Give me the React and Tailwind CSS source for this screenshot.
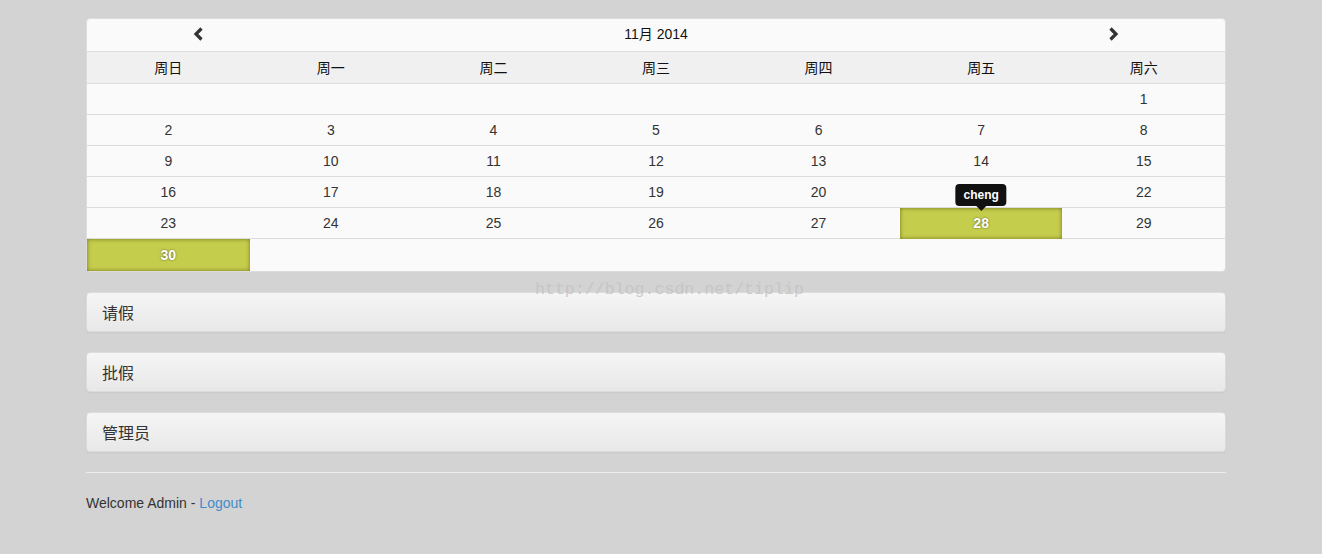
import React from "react";

const days = ["周日", "周一", "周二", "周三", "周四", "周五", "周六"];
const weeks = [
  [null, null, null, null, null, null, 1],
  [2, 3, 4, 5, 6, 7, 8],
  [9, 10, 11, 12, 13, 14, 15],
  [16, 17, 18, 19, 20, 21, 22],
  [23, 24, 25, 26, 27, 28, 29],
  [30, null, null, null, null, null, null],
];
const marked = [28, 30];

function Chevron({ dir }) {
  return (
    <svg width="12" height="14" viewBox="0 0 12 14">
      {dir === "left" ? (
        <path d="M8.5 1.5 L3 7 L8.5 12.5" fill="none" stroke="#333" strokeWidth="3.2" strokeLinejoin="miter" />
      ) : (
        <path d="M3.5 1.5 L9 7 L3.5 12.5" fill="none" stroke="#333" strokeWidth="3.2" strokeLinejoin="miter" />
      )}
    </svg>
  );
}

function Panel({ title }) {
  return (
    <div className="h-[40px] rounded-[4px] border border-[#dcdcdc] bg-gradient-to-b from-[#f5f5f5] to-[#e8e8e8] shadow-[0_1px_2px_rgba(0,0,0,0.05)] flex items-center px-[15px] text-[16px] text-[#333]">
      {title}
    </div>
  );
}

export default function App() {
  return (
    <div
      className="min-h-[554px] w-full bg-[#d3d3d3] relative"
      style={{ fontFamily: '"Liberation Sans", Arial, "Noto Sans CJK SC", sans-serif' }}
    >
      <div className="w-[1140px] ml-[86px] pt-[18px]">
        <div className="rounded-[4px] border border-[#dcdcdc] bg-[#fafafa] overflow-visible text-[14px] text-[#333]">
          <div className="grid grid-cols-[224px_1fr_224px] h-[33px] items-center border-b border-[#ddd]">
            <div className="flex justify-center pb-[2px]"><Chevron dir="left" /></div>
            <div className="text-center text-[14px] text-[#111] pb-[2px]" style={{ fontFamily: '"Liberation Sans", "Noto Sans CJK SC", sans-serif' }}>11月 2014</div>
            <div className="flex justify-center pb-[2px]"><Chevron dir="right" /></div>
          </div>
          <div className="grid grid-cols-7 h-[32px] items-center bg-[#f0f0f0] border-b border-[#ddd]">
            {days.map((d) => (
              <div key={d} className="text-center text-[14px] text-[#111]" style={{ fontFamily: '"Noto Sans CJK SC", sans-serif' }}>{d}</div>
            ))}
          </div>
          {weeks.map((w, i) => (
            <div key={i} className={`grid grid-cols-7 h-[31px] ${i < weeks.length - 1 ? "border-b border-[#ddd]" : ""}`}>
              {w.map((n, j) => {
                const hi = marked.includes(n);
                return (
                  <div
                    key={j}
                    className={
                      hi
                        ? "relative flex items-center justify-center bg-[#c5cd4d] shadow-[inset_0_0_4px_rgba(80,80,0,0.7)] text-white font-bold [text-shadow:0_0_2px_rgba(0,0,0,0.6)] -mb-px"
                        : "flex items-center justify-center"
                    }
                  >
                    {n}
                    {n === 28 && (
                      <div className="absolute bottom-[28px] left-1/2 -translate-x-1/2 flex flex-col items-center z-10">
                        <div className="bg-[#111] text-white text-[12px] font-bold rounded-[4px] px-[8px] h-[22px] flex items-center [text-shadow:none]">cheng</div>
                        <div className="w-0 h-0 border-l-[5px] border-r-[5px] border-t-[5px] border-l-transparent border-r-transparent border-t-[#111]" />
                      </div>
                    )}
                  </div>
                );
              })}
            </div>
          ))}
          <div className="h-[1px]" />
        </div>

        <div className="mt-[20px] flex flex-col gap-[20px]" style={{ fontFamily: '"Noto Sans CJK SC", sans-serif' }}>
          <Panel title="请假" />
          <Panel title="批假" />
          <Panel title="管理员" />
        </div>

        <div className="mt-[20px] border-t border-[#eeeeee]" />
        <div className="mt-[20px] text-[14px] text-[#333]">
          Welcome Admin - <span className="text-[#428bca]">Logout</span>
        </div>
      </div>

      <div
        className="absolute left-[535px] top-[278px] text-[16.6px] text-[#c4c4c4] pointer-events-none"
        style={{ fontFamily: '"Liberation Mono", monospace', opacity: 0.85 }}
      >
        http://blog.csdn.net/tiplip
      </div>
    </div>
  );
}
